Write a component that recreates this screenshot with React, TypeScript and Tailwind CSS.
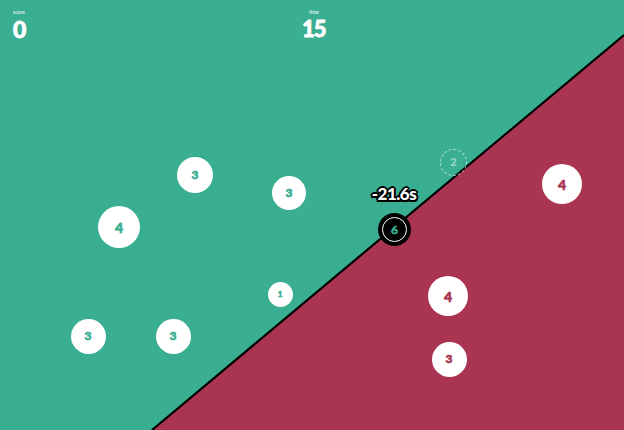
type Dot = { x: number; y: number; d: number; n: number; side: 'green' | 'red'; size: string };

const dots: Dot[] = [
  { x: 195, y: 175, d: 36, n: 3, side: 'green', size: 'text-[12px]' },
  { x: 289, y: 193, d: 34, n: 3, side: 'green', size: 'text-[12px]' },
  { x: 119, y: 227, d: 42, n: 4, side: 'green', size: 'text-[14px]' },
  { x: 280, y: 294, d: 25, n: 1, side: 'green', size: 'text-[8px]' },
  { x: 88, y: 336, d: 35, n: 3, side: 'green', size: 'text-[12px]' },
  { x: 173, y: 336, d: 35, n: 3, side: 'green', size: 'text-[12px]' },
  { x: 448, y: 296, d: 40, n: 4, side: 'red', size: 'text-[14px]' },
  { x: 449, y: 359, d: 35, n: 3, side: 'red', size: 'text-[12px]' },
  { x: 562, y: 184, d: 40, n: 4, side: 'red', size: 'text-[14px]' },
];

export default function App() {
  return (
    <div className="relative w-[624px] h-[430px] overflow-hidden bg-[#39ae91] font-['Lato','Open_Sans',sans-serif] text-white">
      {/* field split */}
      <svg className="absolute inset-0" width="624" height="430" viewBox="0 0 624 430">
        <polygon points="152,430 624,35 624,430" fill="#aa3552" />
        <line x1="152" y1="430" x2="624" y2="35" stroke="#000" strokeWidth="2.2" />
      </svg>

      {/* hud */}
      <div className="relative flex items-start pl-[13px] pt-[9px]">
        <div className="flex w-[289px] flex-col items-start">
          <span className="text-[5px] leading-[6px] font-bold opacity-80">score</span>
          <span className="mt-[3px] text-[23px] leading-[22px] font-black [-webkit-text-stroke:0.8px_white]">0</span>
        </div>
        <div className="flex flex-col items-center">
          <span className="text-[5px] leading-[6px] font-bold opacity-80">time</span>
          <span className="mt-[3px] text-[22px] leading-[22px] font-black tracking-[-1px] [-webkit-text-stroke:0.8px_white]">15</span>
        </div>
      </div>

      {dots.map((p, i) => (
        <div
          key={i}
          className={`absolute flex items-center justify-center rounded-full bg-white font-black ${p.size} ${
            p.side === 'green'
              ? 'text-[#39ae91] [-webkit-text-stroke:0.6px_#39ae91]'
              : 'text-[#aa3552] [-webkit-text-stroke:0.6px_#aa3552]'
          }`}
          style={{ left: p.x - p.d / 2, top: p.y - p.d / 2, width: p.d, height: p.d }}
        >
          {p.n}
        </div>
      ))}

      {/* ghost dot */}
      <div className="absolute left-[440px] top-[149px] w-[27px] h-[27px] rounded-full border border-dashed border-white/60 flex items-center justify-center text-[11px] font-black text-white/50">
        2
      </div>

      {/* player */}
      <div className="absolute left-[378px] top-[213px] w-[33px] h-[33px] rounded-full bg-black flex items-center justify-center">
        <div className="w-[25px] h-[25px] rounded-full border-[1.5px] border-white flex items-center justify-center text-[12px] font-black text-[#39ae91] [-webkit-text-stroke:0.5px_#39ae91]">
          6
        </div>
      </div>
      <div className="absolute left-[366px] top-[184px] w-[56px] text-center text-[17px] leading-[20px] font-black tracking-[-0.5px] [text-shadow:-1.5px_-1.5px_0_#000,1.5px_-1.5px_0_#000,-1.5px_1.5px_0_#000,1.5px_1.5px_0_#000,0_2px_0_#000,2px_0_0_#000,-2px_0_0_#000,0_-2px_0_#000]">
        -21.6s
      </div>
    </div>
  );
}
